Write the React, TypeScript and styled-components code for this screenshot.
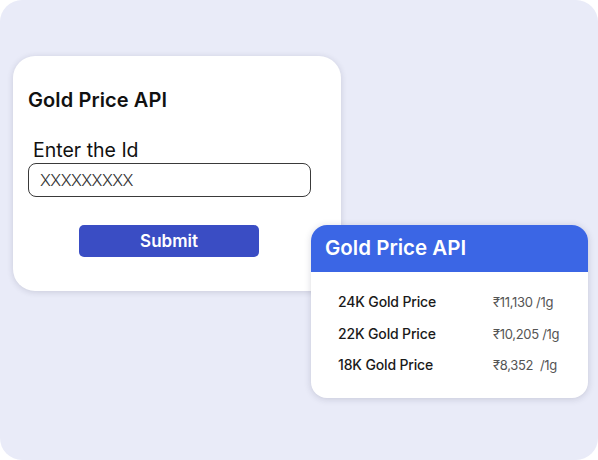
import React from "react";
import styled, { createGlobalStyle } from "styled-components";

const Global = createGlobalStyle`
  html, body { margin: 0; padding: 0; background: #ffffff; }
  body { font-family: "Inter", "Noto Sans", sans-serif; }
  * { box-sizing: border-box; }
`;

const Stage = styled.div`
  width: 598px;
  height: 460px;
  background: #e9ebf8;
  border-radius: 22px;
  padding: 56px 10px 0 13px;
  display: grid;
  grid-template-columns: 298px 30px 247px;
  grid-template-rows: 169px 66px auto;
`;

const FormCard = styled.section`
  grid-column: 1 / 3;
  grid-row: 1 / 3;
  background: #ffffff;
  border-radius: 22px;
  box-shadow: 0 1px 6px rgba(40, 40, 70, 0.16);
  padding: 30px 30px 0 15px;
  display: flex;
  flex-direction: column;
`;

const FormTitle = styled.h1`
  margin: 0;
  font-size: 20px;
  line-height: 28px;
  font-weight: 600;
  color: #111;
  letter-spacing: 0.1px;
`;

const Label = styled.label`
  margin: 24px 0 0 5px;
  font-size: 19.5px;
  line-height: 24px;
  font-weight: 400;
  color: #111;
`;

const Input = styled.div`
  margin-top: 1px;
  height: 34px;
  border: 1.5px solid #3a3a3a;
  border-radius: 8px;
  display: flex;
  align-items: center;
  padding-left: 11px;
  font-size: 16.5px;
  font-weight: 300;
  color: #333;
  letter-spacing: -0.6px;
`;

const Submit = styled.button`
  align-self: flex-start;
  margin: 28px 0 0 51px;
  width: 180px;
  height: 32px;
  border: none;
  border-radius: 5px;
  background: #3a4dc4;
  color: #fff;
  font-family: inherit;
  font-size: 17px;
  font-weight: 600;
  cursor: pointer;
`;

const PriceCard = styled.section`
  grid-column: 2 / 4;
  grid-row: 2 / 4;
  align-self: start;
  background: #ffffff;
  border-radius: 16px;
  box-shadow: 0 1px 7px rgba(40, 40, 70, 0.18);
  overflow: hidden;
`;

const PriceHeader = styled.header`
  height: 47px;
  background: #3b66e5;
  display: flex;
  align-items: center;
  padding: 0 14px 2px;
  color: #fff;
  font-size: 20.5px;
  font-weight: 600;
`;

const PriceBody = styled.div`
  padding: 20px 0 23px 27px;
  display: grid;
  grid-template-columns: 155px auto;
  row-gap: 11.5px;
`;

const RowLabel = styled.span`
  font-size: 14px;
  line-height: 20px;
  font-weight: 500;
  color: #1a1a1a;
  letter-spacing: -0.15px;
`;

const RowValue = styled.span`
  font-size: 13px;
  line-height: 20px;
  font-weight: 400;
  color: #555;
  white-space: pre;
  letter-spacing: -0.3px;
`;

const prices = [
  { k: "24K Gold Price", v: "₹11,130 /1g" },
  { k: "22K Gold Price", v: "₹10,205 /1g" },
  { k: "18K Gold Price", v: "₹8,352  /1g" },
];

export default function App() {
  return (
    <>
      <Global />
      <Stage>
        <FormCard>
          <FormTitle>Gold Price API</FormTitle>
          <Label>Enter the Id</Label>
          <Input>XXXXXXXXX</Input>
          <Submit>Submit</Submit>
        </FormCard>
        <PriceCard>
          <PriceHeader>Gold Price API</PriceHeader>
          <PriceBody>
            {prices.map((p) => (
              <React.Fragment key={p.k}>
                <RowLabel>{p.k}</RowLabel>
                <RowValue>{p.v}</RowValue>
              </React.Fragment>
            ))}
          </PriceBody>
        </PriceCard>
      </Stage>
    </>
  );
}
